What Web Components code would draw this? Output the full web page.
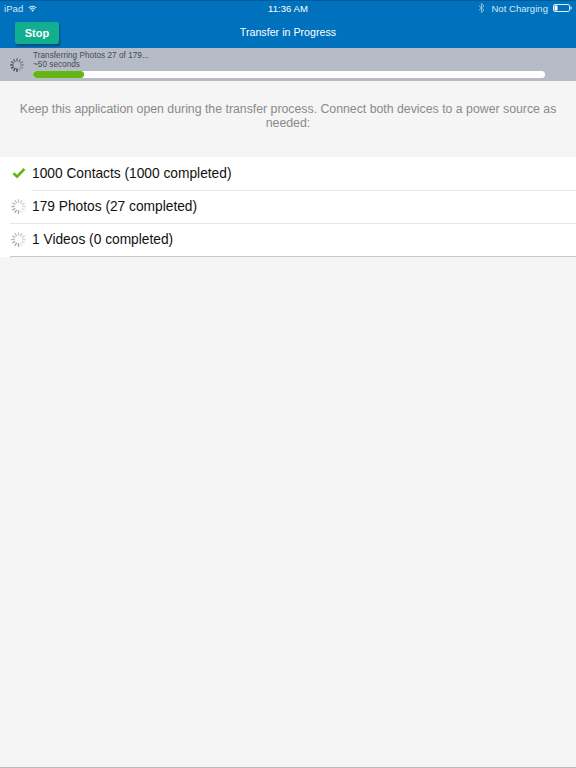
<!DOCTYPE html>
<html>
<head>
<meta charset="utf-8">
<style>
  html, body { margin: 0; height: 100%; background: #f5f5f5; }
  body { font-family: "Liberation Sans", sans-serif; }
</style>
</head>
<body>
<transfer-app>
  <nav-header slot="header" title-text="Transfer in Progress"></nav-header>
  <progress-strip slot="progress" line1="Transferring Photos 27 of 179..." line2="~50 seconds" percent="10"></progress-strip>
  <p slot="message">Keep this application open during the transfer process. Connect both devices to a power source as needed:</p>
  <transfer-row slot="rows" state="done" inset="32">1000 Contacts (1000 completed)</transfer-row>
  <transfer-row slot="rows" state="busy" inset="10">179 Photos (27 completed)</transfer-row>
  <transfer-row slot="rows" state="busy" inset="10" strong>1 Videos (0 completed)</transfer-row>
</transfer-app>

<script>
// little spinner used in the strip and in the rows
function spinner(size, dark) {
  const ticks = [];
  for (let i = 0; i < 12; i++) {
    const a = dark ? 1 - i * 0.065 : 0.62 - i * 0.04;
    const col = dark ? '#2f343c' : '#6f6f6f';
    ticks.push(`<rect x="11" y="1.5" width="2" height="5.5" rx="1" fill="${col}" opacity="${a.toFixed(2)}" transform="rotate(${180 + i * 30} 12 12)"/>`);
  }
  return `<svg width="${size}" height="${size}" viewBox="0 0 24 24">${ticks.join('')}</svg>`;
}

class TransferApp extends HTMLElement {
  constructor() {
    super();
    this.attachShadow({ mode: 'open' }).innerHTML = `
      <style>
        :host { display: flex; flex-direction: column; height: 768px; box-sizing: border-box;
                background: #f5f5f5; border-bottom: 1px solid #b9b9b9; overflow: hidden; }
        .msg { padding: 21px 16px 27px; }
        ::slotted(p) { margin: 0; text-align: center; color: #8a8a8a; font-size: 12.3px; line-height: 14px; }
        .rows { background: #fff; padding-bottom: 1px; }
      </style>
      <slot name="header"></slot>
      <slot name="progress"></slot>
      <div class="msg"><slot name="message"></slot></div>
      <div class="rows"><slot name="rows"></slot></div>`;
  }
}

class NavHeader extends HTMLElement {
  constructor() {
    super();
    this.attachShadow({ mode: 'open' }).innerHTML = `
      <style>
        :host { display: block; height: 48px; background: #0071bc; border-top: 1px solid #005b98;
                box-sizing: border-box; color: #fff; font-family: "Liberation Sans", sans-serif; }
        .status { display: grid; grid-template-columns: 1fr auto 1fr; align-items: center; height: 14px;
                  padding: 0 4px; font-size: 9.5px; color: #d7e8f5; letter-spacing: .05px; }
        .left, .right { display: flex; align-items: center; gap: 5px; }
        .right { justify-content: flex-end; gap: 3px; padding-right: 0; }
        .time { color: #fff; }
        .bar { display: grid; grid-template-columns: 1fr auto 1fr; align-items: center; height: 33px; padding: 0 15px; }
        .stop { justify-self: start; width: 44px; height: 22px; margin-top: 2px; background: #12ae90; border-radius: 2px;
                box-shadow: 1px 2px 2px rgba(0,40,70,.55); font-size: 11px; font-weight: 700;
                display: flex; align-items: center; justify-content: center; }
        .title { font-size: 10.7px; margin-top: 1px; }
      </style>
      <div class="status">
        <div class="left"><span>iPad</span>
          <svg width="9" height="7" viewBox="0 0 11 8"><path d="M.5 2.8a7 7 0 0 1 10 0L9.6 3.7a5.7 5.7 0 0 0-8.2 0zM2.2 4.5a4.6 4.6 0 0 1 6.6 0l-.9.9a3.3 3.3 0 0 0-4.8 0zM3.9 6.2a2.2 2.2 0 0 1 3.2 0L5.5 7.9z" fill="#e3eff8"/></svg>
        </div>
        <div class="time">11:36 AM</div>
        <div class="right">
          <svg width="7" height="10" viewBox="0 0 7 10" style="margin-right:3px"><path d="M1 2.8l5 4.4L3.5 9.4V.6L6 2.8 1 7.2" fill="none" stroke="#9cc4e2" stroke-width=".9"/></svg>
          <span>Not Charging</span>
          <svg width="19" height="8" viewBox="0 0 19 8" style="margin-left:2px"><rect x=".5" y=".5" width="16" height="7" rx="1.4" fill="none" stroke="#e3eff8"/><rect x="1.5" y="1.5" width="3" height="5" fill="#fff"/><rect x="17.4" y="2.6" width="1.2" height="2.8" fill="#e3eff8"/></svg>
        </div>
      </div>
      <div class="bar">
        <div class="stop">Stop</div>
        <div class="title">${this.getAttribute('title-text')}</div>
        <div></div>
      </div>`;
  }
}

class ProgressStrip extends HTMLElement {
  constructor() {
    super();
    this.attachShadow({ mode: 'open' }).innerHTML = `
      <style>
        :host { display: flex; height: 33px; box-sizing: border-box; background: #b5bcc7; padding: 3px 31px 0 9px;
                color: #444a55; font-size: 8.2px; line-height: 9px; letter-spacing: .03px; }
        .spin { width: 15px; height: 15px; margin-top: 6px; margin-right: 9px; flex: none; }
        .main { flex: 1; }
        .text { white-space: nowrap; }
        .track { height: 7px; margin-top: 2px; background: #fff; border-radius: 4px; overflow: hidden; }
        .fill { height: 100%; background: #62b811; border-radius: 4px; }
      </style>
      <div class="spin">${spinner(16, true)}</div>
      <div class="main">
        <div class="text">${this.getAttribute('line1')}</div>
        <div class="text">${this.getAttribute('line2')}</div>
        <div class="track"><div class="fill" style="width:${this.getAttribute('percent')}%"></div></div>
      </div>`;
  }
}

class TransferRow extends HTMLElement {
  constructor() {
    super();
    const icon = this.getAttribute('state') === 'done'
      ? `<svg width="14" height="12" viewBox="0 0 14 12"><path d="M1.5 6.2l3.6 3.4L12.4 2" fill="none" stroke="#62b811" stroke-width="2.6"/></svg>`
      : spinner(17, false);
    const inset = this.getAttribute('inset');
    const line = this.hasAttribute('strong') ? '#c9c9c9' : '#e6e6e6';
    this.attachShadow({ mode: 'open' }).innerHTML = `
      <style>
        :host { display: block; height: 33px; box-sizing: border-box; position: relative; background: #fff; }
        .row { display: flex; align-items: center; height: 32px; padding-left: 10px; box-sizing: border-box;
               color: #111; font-size: 13.75px; }
        .icon { width: 17px; height: 17px; margin-right: 5px; display: flex; align-items: center; justify-content: center; flex: none; }
        .line { position: absolute; z-index: 1; left: ${inset}px; right: 0; bottom: -1px; height: 1px; background: ${line}; }
      </style>
      <div class="row"><div class="icon">${icon}</div><slot></slot></div>
      <div class="line"></div>`;
  }
}

customElements.define('transfer-app', TransferApp);
customElements.define('nav-header', NavHeader);
customElements.define('progress-strip', ProgressStrip);
customElements.define('transfer-row', TransferRow);
</script>
</body>
</html>
